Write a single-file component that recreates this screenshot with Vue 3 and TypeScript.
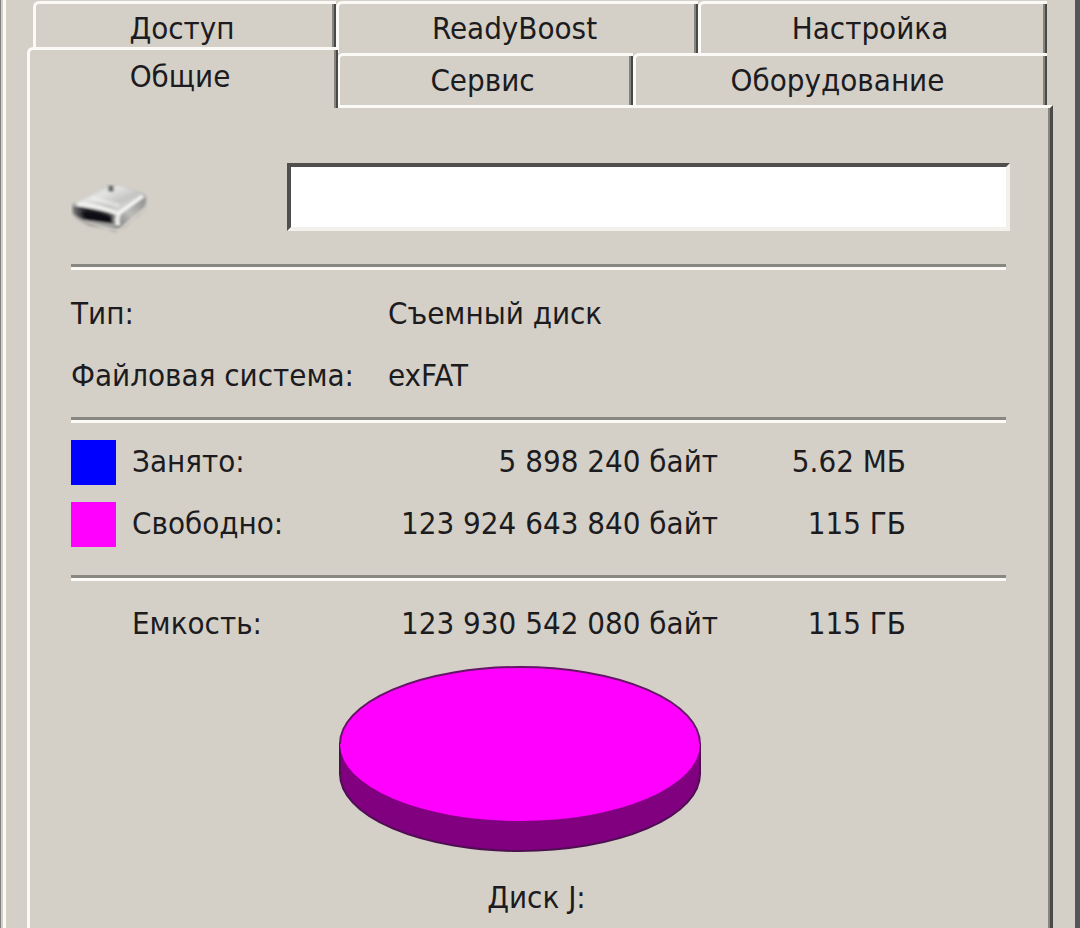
<script setup lang="ts">
import { ref } from 'vue'

interface UsageRow {
  label: string
  bytes: string
  size: string
  kind: 'used' | 'free'
}

const backTabs: string[] = ['Доступ', 'ReadyBoost', 'Настройка']
const frontTabs: string[] = ['Общие', 'Сервис', 'Оборудование']
const activeTab = ref<string>('Общие')
const volumeLabel = ref<string>('')

const usage: UsageRow[] = [
  { label: 'Занято:', bytes: '5 898 240 байт', size: '5.62 МБ', kind: 'used' },
  { label: 'Свободно:', bytes: '123 924 643 840 байт', size: '115 ГБ', kind: 'free' },
]
</script>

<template>
  <main class="dialog">
    <div class="tabs" role="tablist" aria-label="Свойства диска">
      <div class="tab-row back" role="presentation">
        <button
          v-for="tab in backTabs"
          :key="tab"
          type="button"
          role="tab"
          class="tab"
          :aria-selected="tab === activeTab"
          @click="activeTab = tab"
        >{{ tab }}</button>
      </div>
      <div class="tab-row front" role="presentation">
        <button
          v-for="tab in frontTabs"
          :key="tab"
          type="button"
          role="tab"
          class="tab"
          :class="{ active: tab === activeTab }"
          :aria-selected="tab === activeTab"
          @click="activeTab = tab"
        >{{ tab }}</button>
      </div>
    </div>

    <section class="panel" role="tabpanel" aria-label="Общие">
      <div class="name-row">
        <svg class="drive" viewBox="2 0 80 60" preserveAspectRatio="none" aria-hidden="true">
          <defs>
            <linearGradient id="driveTop" x1="0" y1="0" x2="1" y2="1">
              <stop offset="0" stop-color="#a9a9a7" />
              <stop offset="0.35" stop-color="#e4e4e2" />
              <stop offset="0.6" stop-color="#c4c4c3" />
              <stop offset="1" stop-color="#eeeeec" />
            </linearGradient>
            <linearGradient id="driveSide" x1="0" y1="1" x2="1" y2="0">
              <stop offset="0" stop-color="#6f6f6e" />
              <stop offset="0.45" stop-color="#bdbdbb" />
              <stop offset="1" stop-color="#8b8b89" />
            </linearGradient>
            <linearGradient id="driveFront" x1="0" y1="0" x2="1" y2="0">
              <stop offset="0" stop-color="#77777a" />
              <stop offset="0.3" stop-color="#18181c" />
              <stop offset="0.8" stop-color="#3b3b3d" />
              <stop offset="1" stop-color="#9a9a99" />
            </linearGradient>
            <filter id="driveSoft" x="-10%" y="-10%" width="120%" height="120%">
              <feGaussianBlur stdDeviation="1.4" />
            </filter>
          </defs>
          <g filter="url(#driveSoft)">
            <path d="M5 40 L46 57 Q54 55 60 48 L78 28 L70 38 L50 56 L20 50Z" fill="#8c8c86" opacity="0.6" />
            <path d="M3 27 Q2 24 8 22 L32 6 Q39 1 49 3 L71 10 Q78 13 77 20 L76 27 L55 47 Q49 55 42 52 L12 43 Q3 39 3 33Z" fill="#a0a09e" />
            <path d="M49 35 L76 15 Q78 20 76 27 L55 47 Q50 54 46 51Z" fill="url(#driveSide)" />
            <path d="M8 22 L32 6 Q39 1 49 3 L71 10 Q77 13 72 18 L53 34 Q48 38 41 34 L10 27 Q4 25 8 22Z" fill="url(#driveTop)" />
            <path d="M4 27 Q21 28 45 36 Q49 40 47 48 L14 42 Q4 38 4 31Z" fill="url(#driveFront)" />
            <path d="M11 34 Q29 32 43 39 L43 46 L17 41Z" fill="#111114" />
            <path d="M74 15 L51 34 Q47 39 49 49" fill="none" stroke="#f4f4f2" stroke-width="4" />
            <path d="M10 24 Q32 27 48 35" fill="none" stroke="#f0f0ee" stroke-width="4" />
            <path d="M22 17 L50 26" stroke="#f5f5f3" stroke-width="5" opacity="0.5" />
            <path d="M42 3 V10" stroke="#5d5d5c" stroke-width="5" />
          </g>
        </svg>
        <input v-model="volumeLabel" class="name-input" type="text" aria-label="Метка тома" />
      </div>

      <hr class="rule" />

      <dl class="facts">
        <dt>Тип:</dt>
        <dd>Съемный диск</dd>
        <dt>Файловая система:</dt>
        <dd>exFAT</dd>
      </dl>

      <hr class="rule" />

      <table class="usage">
        <tbody>
          <tr v-for="row in usage" :key="row.kind">
            <td class="key"><span class="swatch" :class="row.kind"></span></td>
            <th scope="row">{{ row.label }}</th>
            <td class="bytes">{{ row.bytes }}</td>
            <td class="size">{{ row.size }}</td>
            <td class="rest"></td>
          </tr>
        </tbody>
      </table>

      <hr class="rule" />

      <table class="usage total">
        <tbody>
          <tr>
            <td class="key"></td>
            <th scope="row">Емкость:</th>
            <td class="bytes">123 930 542 080 байт</td>
            <td class="size">115 ГБ</td>
            <td class="rest"></td>
          </tr>
        </tbody>
      </table>

      <figure class="chart">
        <svg class="pie" viewBox="0 0 364 188" aria-hidden="true">
          <path d="M2 79 V109 A180 77 0 0 0 362 109 V79Z" fill="#800080" stroke="#4c1050" stroke-width="2" />
          <ellipse cx="182" cy="79" rx="180" ry="77" fill="#ff00ff" />
          <path d="M2 79 A180 77 0 0 1 362 79" fill="none" stroke="#651565" stroke-width="2" />
        </svg>
        <figcaption>Диск J:</figcaption>
      </figure>
    </section>
  </main>
</template>

<style>
body {
  margin: 0;
  background: #d4d0c8;
}
</style>

<style scoped>
.dialog {
  box-sizing: border-box;
  min-height: 100vh;
  display: flex;
  flex-direction: column;
  padding: 0 22px 0 21px;
  border-left: 3px solid #fbfaf6;
  border-right: 5px solid #55545a;
  margin-left: 3px;
  background: #d4d0c8;
  box-shadow: -2px 0 #d4d0c8, -3px 0 #808080;
  color: #1c1b20;
  font-family: "DejaVu Sans Condensed", "DejaVu Sans", sans-serif;
  font-size: 31px;
  line-height: 40px;
}

.tab-row {
  display: grid;
  margin: 0 6px;
}

.back {
  grid-template-columns: 303fr 362fr 349fr;
  padding-top: 1px;
}

.front {
  grid-template-columns: 304fr 296fr 414fr;
}

.tab {
  height: 52px;
  padding: 0 8px 2px 0;
  border: 0 solid #fbfaf6;
  border-width: 3px 0 0 3px;
  border-top-left-radius: 6px;
  background: #d4d0c8;
  box-shadow: inset -2px 0 #484846, inset -4px 0 #85847f;
  color: inherit;
  font: inherit;
  text-align: center;
}

.active {
  z-index: 1;
  height: 61px;
  margin: -6px -1px -3px -6px;
  padding-bottom: 6px;
}

.panel {
  flex: 1;
  padding: 51px 44px 0 41px;
  border-top: 3px solid #fbfaf6;
  border-left: 3px solid #fbfaf6;
  border-right: 3px solid #4b4a49;
  box-shadow: inset -2px 0 #85847f;
}

.name-row {
  display: flex;
  align-items: center;
  justify-content: space-between;
  gap: 136px;
  margin-right: -4px;
}

.drive {
  flex: none;
  width: 80px;
  height: 52px;
  margin-top: 24px;
}

.name-input {
  box-sizing: border-box;
  flex: 1;
  min-width: 0;
  height: 68px;
  padding: 0 8px;
  border: 4px solid;
  border-color: #504f4e #f3f1ec #f3f1ec #504f4e;
  border-radius: 0;
  outline: 0;
  background: #fff;
  color: inherit;
  font: inherit;
}

.rule {
  height: 3px;
  margin: 0;
  border: 0;
  border-top: 3px solid #888782;
  background: #fbfaf6;
}

.name-row + .rule {
  margin-top: 29px;
}

.facts {
  display: grid;
  grid-template-columns: 317px 1fr;
  row-gap: 22px;
  margin: 23px 0 22px;
}

.facts dt {
  white-space: nowrap;
}

.facts dd {
  margin: 0;
}

.usage {
  width: 100%;
  margin: 8px 0 20px;
  border-collapse: collapse;
  table-layout: fixed;
}

.usage td,
.usage th {
  box-sizing: border-box;
  height: 62px;
  padding: 0 0 2px;
  font-weight: normal;
  text-align: left;
  white-space: nowrap;
}

.usage .key {
  width: 61px;
  padding: 0;
}

.usage .bytes {
  width: 360px;
  text-align: right;
}

.usage .size {
  width: 188px;
  text-align: right;
}

.usage .rest {
  width: 100px;
}

.total {
  margin: 12px 0 10px;
}

.swatch {
  display: block;
  width: 45px;
  height: 45px;
}

.used {
  background: #0000ff;
}

.free {
  background: #ff00ff;
}

.chart {
  display: flex;
  flex-direction: column;
  align-items: center;
  margin: 0;
}

.pie {
  width: 364px;
  height: 188px;
  margin-right: 37px;
}

.chart figcaption {
  margin: 24px 4px 0 0;
}
</style>
